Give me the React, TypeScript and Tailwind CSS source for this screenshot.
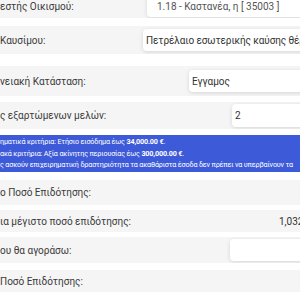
import React from 'react'

// ─── Form row pieces ─────────────────────────────────────────────────────────

function Field({ children, className = '' }: { children?: React.ReactNode; className?: string }) {
  return (
    <div className={`flex items-center shrink-0 w-[220px] h-[22px] bg-white rounded-[4px] shadow-[0_1px_4px_rgba(0,0,0,0.13)] text-[#333] whitespace-nowrap ${className}`}>
      {children}
    </div>
  )
}

function Row({ label, labelWidth, height, children }: {
  label: string
  labelWidth: string
  height: string
  children?: React.ReactNode
}) {
  return (
    <div className={`flex items-center bg-[#f5f5f5] overflow-hidden ${height}`}>
      <span className={`shrink-0 whitespace-nowrap text-[#3a3a3a] ${labelWidth}`}>{label}</span>
      {children}
    </div>
  )
}

// ─── Main ────────────────────────────────────────────────────────────────────

export default function App() {
  return (
    <div className="w-[300px] h-[300px] overflow-hidden bg-white text-[10px] font-['Roboto',sans-serif]">
      <div className="flex flex-col -mt-[6px]">
        <Row label="εστής Οικισμού:" labelWidth="w-[147px]" height="h-[24px]">
          <Field className="pl-[10px] text-[#555]">1.18 - Καστανέα, η [ 35003 ]</Field>
        </Row>

        <div className="h-[8px]" />
        <Row label="Καυσίμου:" labelWidth="w-[143px]" height="h-[28px]">
          <Field className="pl-[3px] tracking-[-0.1px]">Πετρέλαιο εσωτερικής καύσης θέρμανσης</Field>
        </Row>

        <div className="h-[12px]" />
        <Row label="νειακή Κατάσταση:" labelWidth="w-[189px]" height="h-[30px]">
          <Field className="pl-[3px]">Εγγαμος</Field>
        </Row>

        <div className="h-[6px]" />
        <Row label="ς εξαρτώμενων μελών:" labelWidth="w-[232px]" height="h-[27px]">
          <Field className="pl-[3px] h-[23px]">2</Field>
        </Row>

        <div className="h-[6px]" />
        <div className="h-[37px] bg-[#3d5ad8] text-white text-[7.2px] tracking-[-0.15px] leading-[11.5px] pt-[1px] whitespace-nowrap overflow-hidden">
          <p>ηματικά κριτήρια: Ετήσιο εισόδημα έως <b>34,000.00 €</b>.</p>
          <p>ακά κριτήρια: Αξία ακίνητης περιουσίας έως <b>300,000.00 €</b>.</p>
          <p>ς ασκούν επιχειρηματική δραστηριότητα τα ακαθάριστα έσοδα δεν πρέπει να υπερβαίνουν τα</p>
        </div>

        <div className="h-[8px]" />
        <Row label="ο Ποσό Επιδότησης:" labelWidth="w-[200px]" height="h-[25px]" />

        <div className="h-[5px]" />
        <Row label="ια μέγιστο ποσό επιδότησης:" labelWidth="w-[279px]" height="h-[22px]">
          <span className="shrink-0 whitespace-nowrap text-[#333]">1,032.00 €</span>
        </Row>

        <div className="h-[5px]" />
        <Row label="ου θα αγοράσω:" labelWidth="w-[230px]" height="h-[26px]">
          <Field className="h-[20px]" />
        </Row>

        <div className="h-[7px]" />
        <Row label="Ποσό Επιδότησης:" labelWidth="w-[200px]" height="h-[22px]" />
      </div>
    </div>
  )
}
